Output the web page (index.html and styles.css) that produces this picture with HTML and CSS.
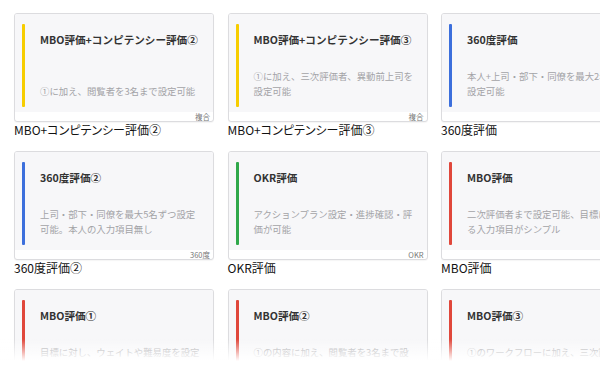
FILE: index.html
```html
<!DOCTYPE html>
<html lang="ja">
<head>
    <meta charset="UTF-8">
    <meta name="viewport" content="width=device-width, initial-scale=1.0">
    <title>評価テンプレート</title>
    <link rel="stylesheet" href="styles.css">
</head>
<body>

    <div class="templates">
        <div class="item">
            <div class="card">
                <div class="card-body">
                    <div class="bar yellow"></div>
                    <div class="content">
                        <strong class="title">MBO評価+コンピテンシー評価②</strong>
                        <p class="desc">①に加え、閲覧者を3名まで設定可能</p>
                    </div>
                </div>
                <div class="tag">複合</div>
            </div>
            <div class="label">MBO+コンピテンシー評価②</div>
        </div>

        <div class="item">
            <div class="card">
                <div class="card-body">
                    <div class="bar yellow"></div>
                    <div class="content">
                        <strong class="title">MBO評価+コンピテンシー評価③</strong>
                        <p class="desc">①に加え、三次評価者、異動前上司を設定可能</p>
                    </div>
                </div>
                <div class="tag">複合</div>
            </div>
            <div class="label">MBO+コンピテンシー評価③</div>
        </div>

        <div class="item">
            <div class="card">
                <div class="card-body">
                    <div class="bar blue"></div>
                    <div class="content">
                        <strong class="title">360度評価</strong>
                        <p class="desc">本人+上司・部下・同僚を最大2名ずつ設定可能</p>
                    </div>
                </div>
                <div class="tag">360度</div>
            </div>
            <div class="label">360度評価</div>
        </div>

        <div class="item">
            <div class="card">
                <div class="card-body">
                    <div class="bar blue"></div>
                    <div class="content">
                        <strong class="title">360度評価②</strong>
                        <p class="desc">上司・部下・同僚を最大5名ずつ設定可能。本人の入力項目無し</p>
                    </div>
                </div>
                <div class="tag">360度</div>
            </div>
            <div class="label">360度評価②</div>
        </div>

        <div class="item">
            <div class="card">
                <div class="card-body">
                    <div class="bar green"></div>
                    <div class="content">
                        <strong class="title">OKR評価</strong>
                        <p class="desc">アクションプラン設定・進捗確認・評価が可能</p>
                    </div>
                </div>
                <div class="tag">OKR</div>
            </div>
            <div class="label">OKR評価</div>
        </div>

        <div class="item">
            <div class="card">
                <div class="card-body">
                    <div class="bar red"></div>
                    <div class="content">
                        <strong class="title">MBO評価</strong>
                        <p class="desc">二次評価者まで設定可能、目標に対する入力項目がシンプル</p>
                    </div>
                </div>
                <div class="tag">MBO</div>
            </div>
            <div class="label">MBO評価</div>
        </div>

        <div class="item">
            <div class="card">
                <div class="card-body">
                    <div class="bar red"></div>
                    <div class="content">
                        <strong class="title">MBO評価①</strong>
                        <p class="desc">目標に対し、ウェイトや難易度を設定できる</p>
                    </div>
                </div>
                <div class="tag">MBO</div>
            </div>
            <div class="label">MBO評価①</div>
        </div>

        <div class="item">
            <div class="card">
                <div class="card-body">
                    <div class="bar red"></div>
                    <div class="content">
                        <strong class="title">MBO評価②</strong>
                        <p class="desc">①の内容に加え、閲覧者を3名まで設定可能</p>
                    </div>
                </div>
                <div class="tag">MBO</div>
            </div>
            <div class="label">MBO評価②</div>
        </div>

        <div class="item">
            <div class="card">
                <div class="card-body">
                    <div class="bar red"></div>
                    <div class="content">
                        <strong class="title">MBO評価③</strong>
                        <p class="desc">①のワークフローに加え、三次評価者、異動前上司を設定可能</p>
                    </div>
                </div>
                <div class="tag">MBO</div>
            </div>
            <div class="label">MBO評価③</div>
        </div>
    </div>

    <div class="fade"></div>

</body>
</html>
```

FILE: styles.css
```css
html {
    overflow: hidden;
}
body {
    margin: 0;
    padding: 13px 0 0 14px;
    font-family: "Noto Sans CJK JP", "Noto Sans", sans-serif;
    background: #fff;
    color: #222;
}
.templates {
    display: grid;
    grid-template-columns: repeat(3, 200px);
    column-gap: 13.5px;
    row-gap: 13px;
    width: 700px;
}
.card {
    border: 1px solid #dcdcdf;
    border-radius: 3px;
    overflow: hidden;
    background: #fff;
    box-shadow: 0 1px 1px rgba(0, 0, 0, 0.04);
}
.card-body {
    display: flex;
    height: 98px;
    box-sizing: border-box;
    padding: 10px 0 5px 7px;
    background: #f7f7f9;
}
.bar {
    width: 3px;
    flex-shrink: 0;
    border-radius: 1px;
}
.yellow { background: #f7cd00; }
.blue { background: #3c6fdc; }
.green { background: #2fa84a; }
.red { background: #e0473b; }
.content {
    flex: 1;
    display: flex;
    flex-direction: column;
    justify-content: space-between;
    padding: 9px 12px 8px 15px;
}
.title {
    font-size: 10.6px;
    line-height: 14px;
    font-weight: bold;
    color: #333;
    white-space: nowrap;
}
.desc {
    margin: 0;
    font-size: 9.4px;
    line-height: 15px;
    color: #a3a3a7;
}
.tag {
    height: 9px;
    padding-right: 3px;
    text-align: right;
    font-size: 7.5px;
    line-height: 9px;
    color: #777;
}
.label {
    font-size: 12px;
    line-height: 16px;
    color: #111;
    font-feature-settings: "palt";
    white-space: nowrap;
}
.fade {
    position: fixed;
    left: 0;
    right: 0;
    bottom: 0;
    height: 36px;
    background: linear-gradient(to bottom, rgba(255, 255, 255, 0) 0, #fff 22px);
}
```
